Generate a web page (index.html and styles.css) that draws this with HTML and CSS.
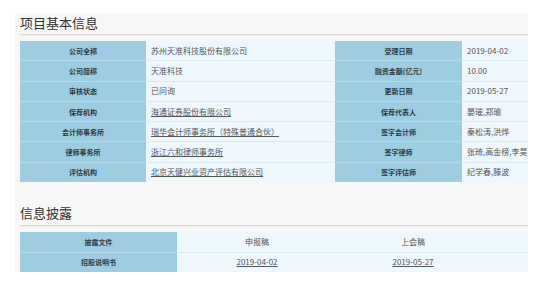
FILE: index.html
```html
<!DOCTYPE html>
<html lang="zh-CN">
<head>
<meta charset="utf-8">
<link rel="stylesheet" href="styles.css">
</head>
<body>
<div class="panel">
  <h2 class="title">项目基本信息</h2>
  <table class="info">
    <colgroup><col class="c1"><col class="c2"><col class="c3"><col class="c4"></colgroup>
    <tr><th>公司全称</th><td>苏州天准科技股份有限公司</td><th>受理日期</th><td>2019-04-02</td></tr>
    <tr><th>公司简称</th><td>天准科技</td><th>融资金额(亿元)</th><td>10.00</td></tr>
    <tr><th>审核状态</th><td>已问询</td><th>更新日期</th><td>2019-05-27</td></tr>
    <tr><th>保荐机构</th><td><a>海通证券股份有限公司</a></td><th>保荐代表人</th><td>晏璀,郑瑜</td></tr>
    <tr><th>会计师事务所</th><td><a>瑞华会计师事务所（特殊普通合伙）</a></td><th>签字会计师</th><td>秦松涛,洪烨</td></tr>
    <tr><th>律师事务所</th><td><a>浙江六和律师事务所</a></td><th>签字律师</th><td>张琦,高金榜,李昊</td></tr>
    <tr><th>评估机构</th><td><a>北京天健兴业资产评估有限公司</a></td><th>签字评估师</th><td>纪学春,滕波</td></tr>
  </table>

  <h2 class="title second">信息披露</h2>
  <table class="disc">
    <colgroup><col class="d1"><col class="d2"><col class="d3"></colgroup>
    <tr><th>披露文件</th><td>申报稿</td><td class="last">上会稿</td></tr>
    <tr><th>招股说明书</th><td><a>2019-04-02</a></td><td class="last"><a>2019-05-27</a></td></tr>
  </table>
</div>
</body>
</html>
```

FILE: styles.css
```css
html, body {
  margin: 0;
  background: #ffffff;
}
body {
  padding: 13px 22px 0 15px;
  font-family: "Noto Sans CJK SC", "Noto Sans", sans-serif;
}
.panel {
  background: #f7f7f7;
  padding-left: 5px;
}
.title {
  margin: 0;
  font-size: 13px;
  font-weight: normal;
  color: #333;
  line-height: 20px;
  padding-bottom: 1px;
  border-bottom: 1px solid #d6d6d6;
  box-shadow: 0 1px 0 #ececec;
}
.title.second {
  margin-top: 21px;
  padding-bottom: 2px;
}
table {
  border-collapse: collapse;
  width: 508px;
  table-layout: fixed;
  margin-top: 6px;
}
th, td {
  padding: 0;
  height: 19.3px;
  line-height: 12px;
  white-space: nowrap;
  overflow: hidden;
}
th {
  background: #9ecde2;
  color: #2f3b40;
  font-weight: bold;
  font-size: 7px;
  text-align: center;
  border-bottom: 1px solid #b8dbea;
}
td {
  background: #edf7fc;
  color: #555;
  font-size: 8px;
  padding-left: 5px;
  border-bottom: 1px solid #dae8ef;
}
tr:last-child th, tr:last-child td {
  border-bottom: none;
}
a {
  color: #555;
  text-decoration: underline;
}
.c1 { width: 126px; }
.c2 { width: 189px; }
.c3 { width: 127px; }
.c4 { width: 66px; }

.disc { margin-top: 6px; }
.disc th, .disc td { height: 19.5px; }
.disc td {
  text-align: center;
  padding-left: 0;
}
.disc td.last { padding-right: 39px; }
.d1 { width: 157px; }
.d2 { width: 160px; }
.d3 { width: 191px; }
```
